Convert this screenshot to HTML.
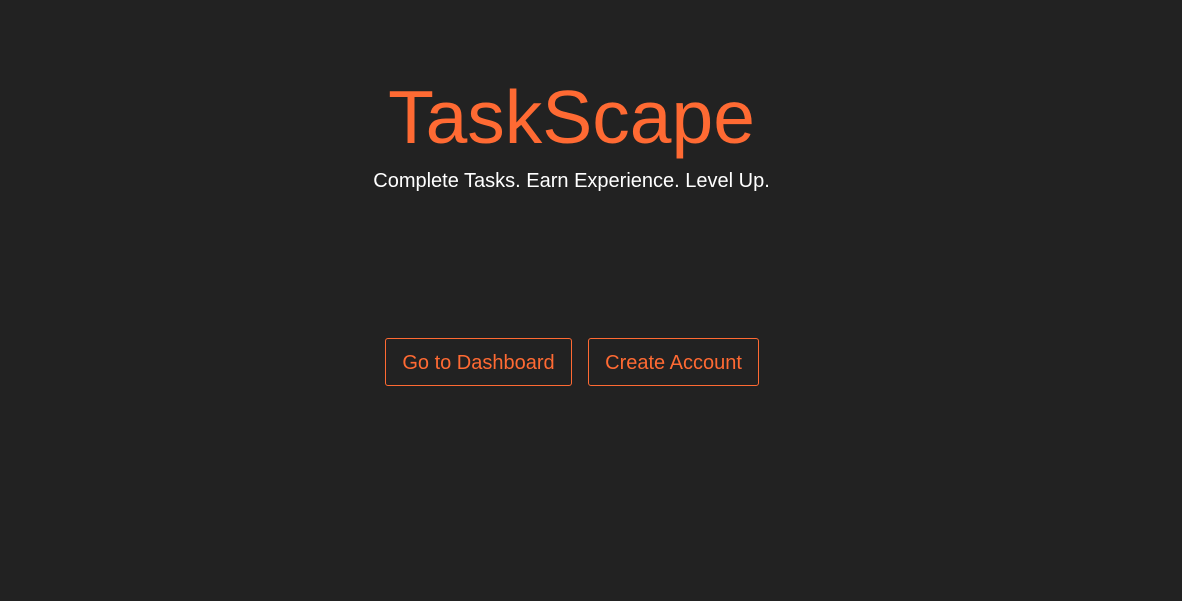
<!DOCTYPE html>
<html><head><style>
html,body{margin:0;background:#222222;width:1182px;height:601px;overflow:hidden;font-family:"Liberation Sans",Arial,sans-serif}
.t{position:absolute;left:0;width:1143px;text-align:center;color:#ff6a33;font-size:75px;top:74px;line-height:86px}
.s{position:absolute;left:0;width:1143px;text-align:center;color:#fff;font-size:20px;top:169px;line-height:24px}
.b{position:absolute;top:338px;height:46px;border:1px solid #ff6a33;border-radius:3px;color:#ff6a33;font-size:20px;line-height:48px;text-align:center;box-sizing:content-box}
</style></head><body>
<div class="t">TaskScape</div>
<div class="s">Complete Tasks. Earn Experience. Level Up.</div>
<div class="b" style="left:385px;width:185px">Go to Dashboard</div>
<div class="b" style="left:588px;width:169px">Create Account</div>
</body></html>
